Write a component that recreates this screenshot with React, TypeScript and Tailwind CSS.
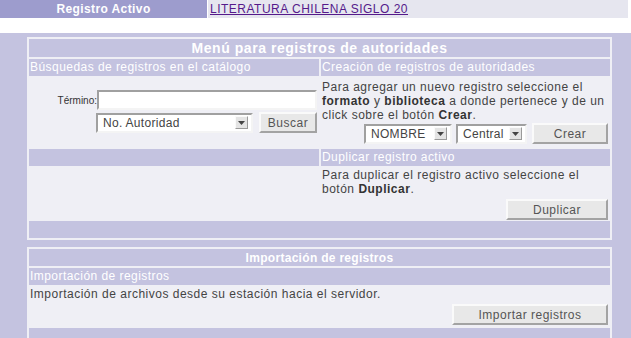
import React from 'react';

const font = { fontFamily: '"Liberation Sans", Arial, sans-serif' };

function Button({ className, children }: { className: string; children: React.ReactNode }) {
  return (
    <div
      className={`flex items-center justify-center h-[21px] bg-[#e8e8e8] border-2 border-t-[#fafafa] border-l-[#fafafa] border-b-[#a3a3a3] border-r-[#a3a3a3] text-[12px] tracking-[0.5px] text-[#555] ${className}`}
    >
      {children}
    </div>
  );
}

function Arrow() {
  return (
    <div className="w-[13px] h-[13px] bg-[#e4e4e4] border border-t-[#fafafa] border-l-[#fafafa] border-b-[#9a9a9a] border-r-[#9a9a9a] flex items-center justify-center">
      <svg width="7" height="4" viewBox="0 0 7 4">
        <path d="M0 0 L7 0 L3.5 4 Z" fill="#444" />
      </svg>
    </div>
  );
}

function Select({ className, label }: { className: string; label: string }) {
  return (
    <div
      className={`flex items-center justify-between h-[20px] bg-white border-2 border-t-[#a0a0a0] border-l-[#a0a0a0] border-b-[#f4f4f4] border-r-[#f4f4f4] pl-[5px] pr-[3px] text-[12px] tracking-[0.3px] text-[#444] ${className}`}
    >
      <span>{label}</span>
      <Arrow />
    </div>
  );
}

export default function App() {
  return (
    <div className="w-[631px] h-[338px] overflow-hidden bg-white" style={font}>
      {/* active record bar */}
      <div className="flex h-[18px] gap-[1px] w-[628px]">
        <div className="w-[207px] bg-[#9d9ccd] text-white font-bold text-[12px] tracking-[0.4px] flex items-center justify-center">
          Registro Activo
        </div>
        <div className="flex-1 bg-[#e6e6ef] flex items-center pl-[2px]">
          <a href="#" className="text-[12px] tracking-[0.5px] text-[#551a8b] underline">
            LITERATURA CHILENA SIGLO 20
          </a>
        </div>
      </div>

      <div className="h-[15px]" />

      <div className="bg-[#c4c3e0] h-[305px] pt-[4px] pl-[27px]">
        {/* authority menu */}
        <div className="w-[585px] bg-[#efeff5] p-[2px] grid grid-cols-[290px_289px] gap-x-[2px]">
          <div className="col-span-2 h-[18px] bg-[#c4c3e0] text-white font-bold text-[14px] tracking-[0.55px] flex items-center justify-center mb-[2px]">
            Menú para registros de autoridades
          </div>

          <div className="h-[17px] bg-[#c4c3e0] text-white text-[12px] tracking-[0.45px] leading-[17px] pl-[1px]">
            Búsquedas de registros en el catálogo
          </div>
          <div className="h-[17px] bg-[#c4c3e0] text-white text-[12px] tracking-[0.45px] leading-[17px] pl-[1px]">
            Creación de registros de autoridades
          </div>

          <div className="h-[71px] pt-[14px] pr-[2px] flex flex-col items-end gap-[2px]">
            <div className="flex items-center">
              <span className="text-[10px] text-[#333]">Término:</span>
              <div className="w-[220px] h-[20px] bg-white border-2 border-t-[#a0a0a0] border-l-[#a0a0a0] border-b-[#f4f4f4] border-r-[#f4f4f4]" />
            </div>
            <div className="flex items-center gap-[6px]">
              <Select className="w-[157px]" label="No. Autoridad" />
              <Button className="w-[58px]">Buscar</Button>
            </div>
          </div>
          <div className="h-[71px] pt-[4px] pl-[1px] pr-[2px] flex flex-col">
            <p className="text-[12px] leading-[14px] tracking-[0.5px] text-[#444]">
              Para agregar un nuevo registro seleccione el <b className="text-[#333]">formato</b> y{' '}
              <b className="text-[#333]">biblioteca</b> a donde pertenece y de un click sobre el botón{' '}
              <b className="text-[#333]">Crear</b>.
            </p>
            <div className="flex justify-end items-center mt-[1px]">
              <Select className="w-[88px] mr-[4px]" label="NOMBRE" />
              <Select className="w-[71px] mr-[5px]" label="Central" />
              <Button className="w-[76px]">Crear</Button>
            </div>
          </div>

          <div className="h-[17px] bg-[#c4c3e0] mt-[2px]" />
          <div className="h-[17px] bg-[#c4c3e0] mt-[2px] text-white text-[12px] tracking-[0.45px] leading-[17px] pl-[1px]">
            Duplicar registro activo
          </div>

          <div className="h-[55px]" />
          <div className="h-[55px] pt-[2px] pl-[1px] pr-[2px] flex flex-col">
            <p className="text-[12px] leading-[14px] tracking-[0.5px] text-[#444]">
              Para duplicar el registro activo seleccione el botón <b className="text-[#333]">Duplicar</b>.
            </p>
            <div className="flex justify-end mt-[3px]">
              <Button className="w-[102px]">Duplicar</Button>
            </div>
          </div>

          <div className="col-span-2 h-[17px] bg-[#c4c3e0]" />
        </div>

        <div className="h-[7px]" />

        {/* import */}
        <div className="w-[585px] bg-[#efeff5] p-[2px] flex flex-col">
          <div className="h-[17px] bg-[#c4c3e0] text-white font-bold text-[12px] tracking-[0.3px] flex items-center justify-center mb-[2px]">
            Importación de registros
          </div>
          <div className="h-[17px] bg-[#c4c3e0] text-white text-[12px] tracking-[0.45px] leading-[17px] pl-[1px]">
            Importación de registros
          </div>
          <div className="h-[42px] pt-[2px] pl-[1px] pr-[2px] flex flex-col">
            <p className="text-[12px] leading-[14px] tracking-[0.5px] text-[#444]">
              Importación de archivos desde su estación hacia el servidor.
            </p>
            <div className="flex justify-end mt-[3px]">
              <Button className="w-[156px]">Importar registros</Button>
            </div>
          </div>
          <div className="h-[17px] bg-[#c4c3e0] mt-[1px]" />
        </div>
      </div>
    </div>
  );
}
